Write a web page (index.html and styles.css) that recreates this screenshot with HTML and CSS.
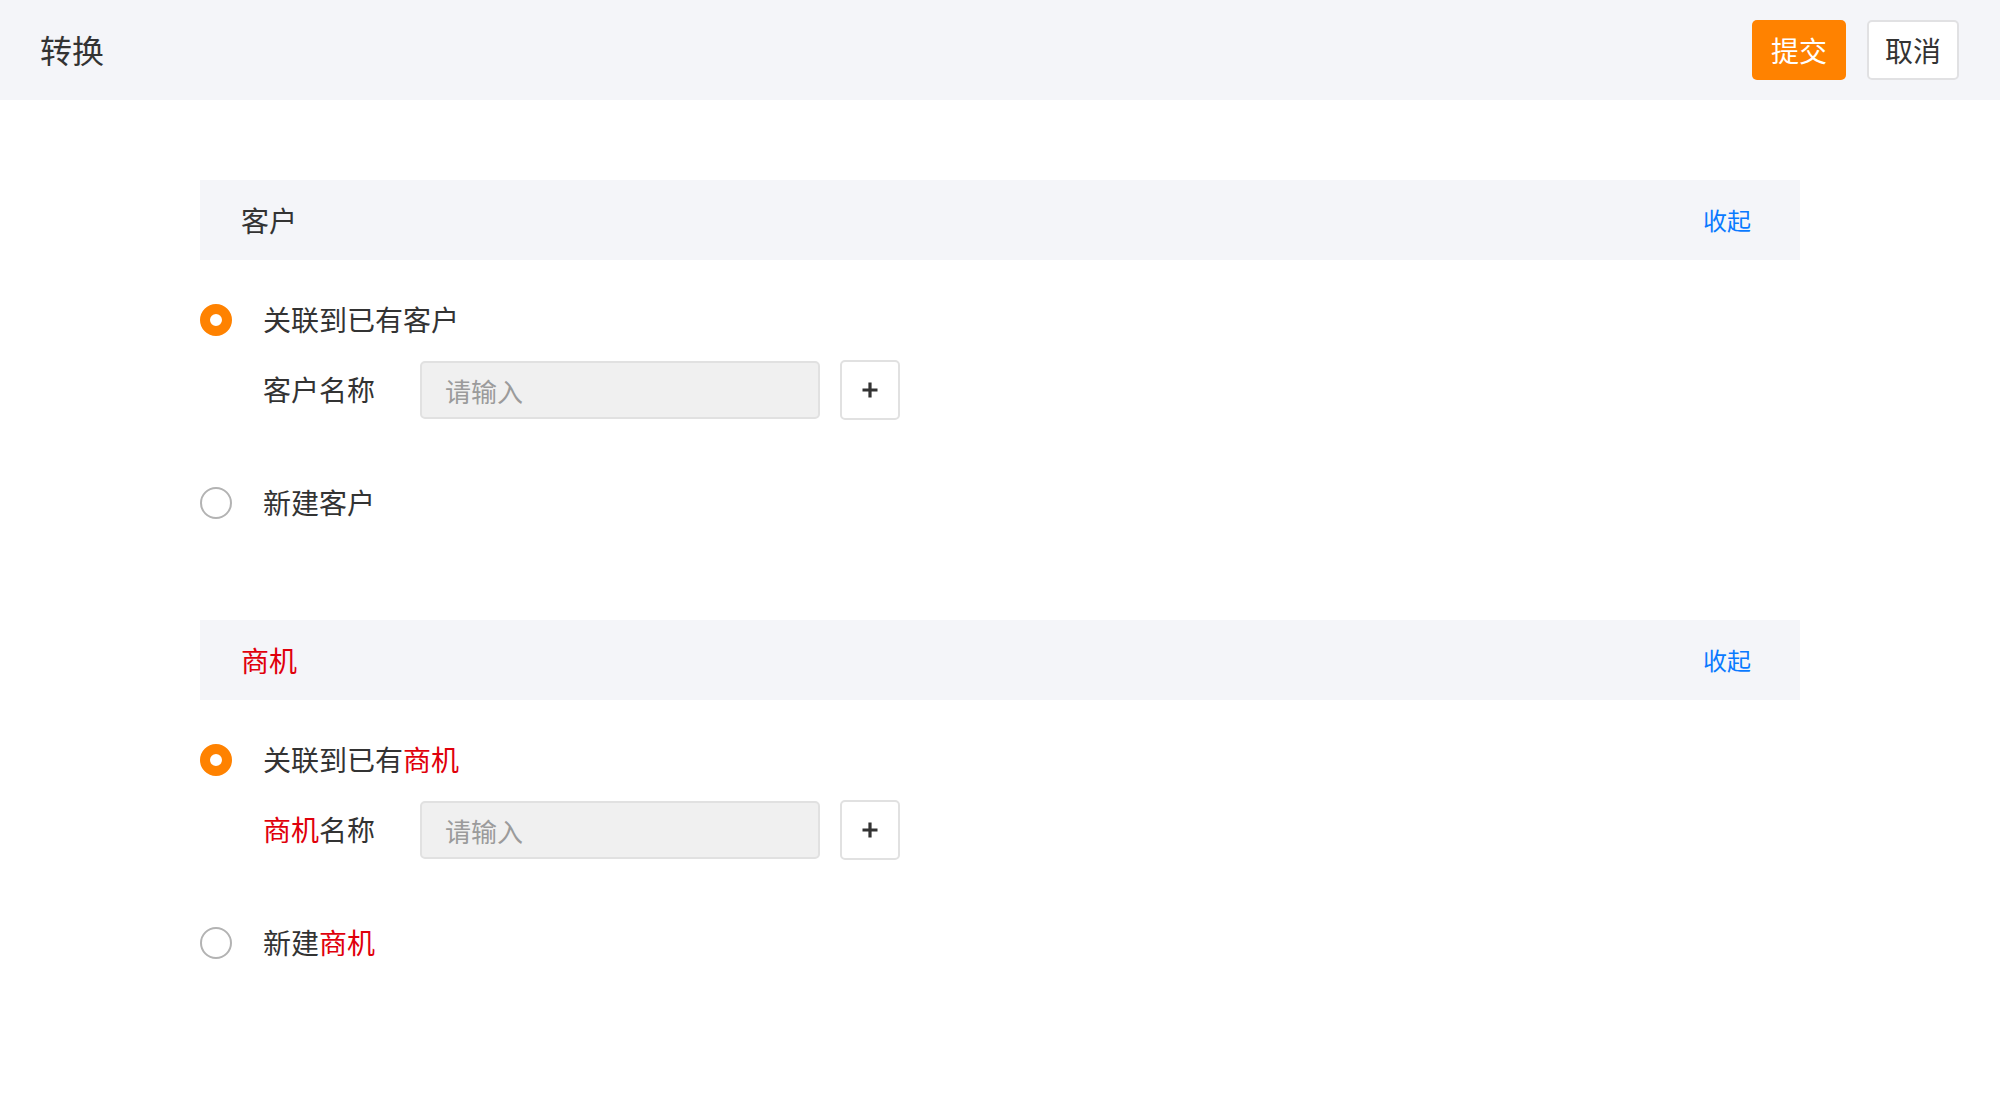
FILE: index.html
```html
<!DOCTYPE html>
<html lang="zh-CN">
<head>
    <meta charset="UTF-8">
    <meta name="viewport" content="width=device-width, initial-scale=1.0">
    <title>转换</title>
    <link rel="stylesheet" href="styles.css">
</head>
<body>
    <div class="topbar">
        <div class="page-title">转换</div>
        <div class="actions">
            <button class="btn btn-primary">提交</button>
            <button class="btn btn-default">取消</button>
        </div>
    </div>

    <div class="content">
        <div class="section">
            <div class="section-head">
                <span class="section-title">客户</span>
                <a class="collapse" href="#">收起</a>
            </div>
            <div class="option">
                <span class="radio checked"></span>
                <span class="option-label">关联到已有客户</span>
            </div>
            <div class="field">
                <span class="field-label">客户名称</span>
                <input class="text-input" type="text" placeholder="请输入">
                <button class="btn-add">
                    <svg width="18" height="18" viewBox="0 0 18 18"><path d="M9 1.5v15M1.5 9h15" stroke="#333" stroke-width="3.2" fill="none"/></svg>
                </button>
            </div>
            <div class="option option-new">
                <span class="radio"></span>
                <span class="option-label">新建客户</span>
            </div>
        </div>

        <div class="section">
            <div class="section-head">
                <span class="section-title red">商机</span>
                <a class="collapse" href="#">收起</a>
            </div>
            <div class="option">
                <span class="radio checked"></span>
                <span class="option-label">关联到已有<span class="red">商机</span></span>
            </div>
            <div class="field">
                <span class="field-label"><span class="red">商机</span>名称</span>
                <input class="text-input" type="text" placeholder="请输入">
                <button class="btn-add">
                    <svg width="18" height="18" viewBox="0 0 18 18"><path d="M9 1.5v15M1.5 9h15" stroke="#333" stroke-width="3.2" fill="none"/></svg>
                </button>
            </div>
            <div class="option option-new">
                <span class="radio"></span>
                <span class="option-label">新建<span class="red">商机</span></span>
            </div>
        </div>
    </div>
</body>
</html>
```

FILE: styles.css
```css
body {
    margin: 0;
    padding: 0;
    font-family: "Noto Sans CJK SC", "Noto Sans", sans-serif;
    color: #333;
    background-color: #ffffff;
}
.topbar {
    height: 100px;
    background-color: #f4f5f9;
    display: flex;
    align-items: center;
    justify-content: space-between;
    padding: 0 41px 0 40px;
}
.page-title {
    font-size: 32px;
    color: #333;
    line-height: 1;
    margin-top: -2px;
}
.actions {
    display: flex;
    gap: 21px;
}
.btn {
    height: 60px;
    padding: 0;
    border-radius: 5px;
    font-family: inherit;
    font-size: 28px;
    line-height: 1;
    cursor: pointer;
}
.btn-primary {
    width: 94px;
    background-color: #ff8200;
    border: none;
    color: #ffffff;
}
.btn-default {
    width: 92px;
    background-color: #ffffff;
    border: 2px solid #e1e1e3;
    color: #333;
}
.content {
    width: 1600px;
    margin: 80px auto 0;
}
.section {
    margin-bottom: 97px;
}
.section-head {
    height: 80px;
    background-color: #f4f5f9;
    display: flex;
    align-items: center;
    justify-content: space-between;
    padding: 0 49px 0 41px;
}
.section-title {
    font-size: 28px;
    line-height: 1;
}
.collapse {
    font-size: 24px;
    line-height: 1;
    color: #0a7aff;
    text-decoration: none;
}
.red {
    color: #e0000b;
}
.option {
    display: flex;
    align-items: center;
    height: 40px;
    margin-top: 40px;
}
.option-new {
    margin-top: 63px;
}
.radio {
    width: 32px;
    height: 32px;
    box-sizing: border-box;
    border-radius: 50%;
    border: 2px solid #b3b3b3;
    background-color: #fff;
    margin-right: 31px;
}
.radio.checked {
    border: 10px solid #ff8200;
}
.option-label {
    font-size: 28px;
    line-height: 1;
    margin-top: -2px;
}
.field {
    display: flex;
    align-items: center;
    margin-top: 20px;
    padding-left: 63px;
}
.field-label {
    font-size: 28px;
    line-height: 1;
    width: 157px;
    margin-top: -2px;
}
.text-input {
    width: 400px;
    height: 58px;
    box-sizing: border-box;
    border: 2px solid #e1e1e1;
    border-radius: 5px;
    background-color: #f0f0f0;
    padding: 0 23px;
    font-family: inherit;
    font-size: 26px;
    color: #333;
    outline: none;
}
.text-input::placeholder {
    color: #9b9b9b;
}
.btn-add {
    width: 60px;
    height: 60px;
    margin-left: 20px;
    box-sizing: border-box;
    border: 2px solid #e1e1e1;
    border-radius: 5px;
    background-color: #fff;
    display: flex;
    align-items: center;
    justify-content: center;
    padding: 0;
}
```
